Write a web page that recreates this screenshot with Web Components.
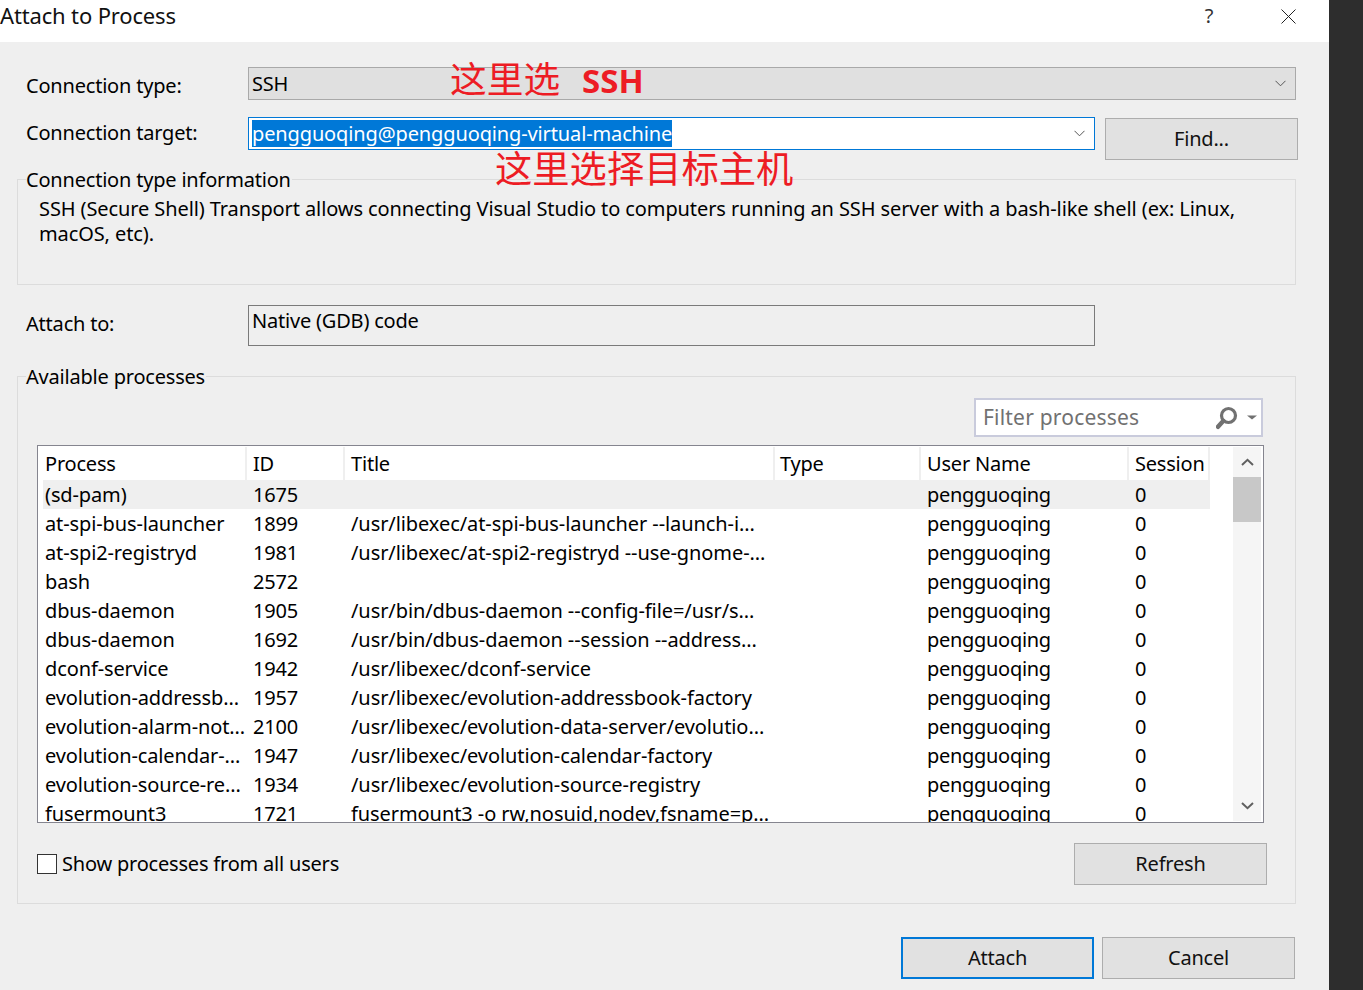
<!DOCTYPE html>
<html>
<head>
<meta charset="utf-8">
<title>Attach to Process</title>
<style>
  html, body{
    margin: 0;
    height: 990px;
    overflow: hidden;
    background: #2d2d2d;
    font-family: "Noto Sans", "Noto Sans CJK SC", sans-serif;
    font-size: 20px;
    color: #000;
  }
</style>
</head>
<body>

<vs-dialog heading="Attach to Process">
  <vs-row label="Connection type:">
    <vs-select kind="flat" style="width:1048px">SSH</vs-select>
  </vs-row>
  <vs-row label="Connection target:" style="margin-top:13px;--label-height:32px">
    <vs-select kind="focus" style="width:847px"><span style="background:#0078d7;color:#fff">pengguoqing@pengguoqing-virtual-machine</span></vs-select>
    <vs-button style="margin-left:10px;margin-top:1px">Find...</vs-button>
  </vs-row>

  <vs-group label="Connection type information" style="margin-top:19px;height:106px">
    <div style="padding:3px 40px 0 21px;line-height:25px;letter-spacing:-.1px">SSH (Secure Shell) Transport allows connecting Visual Studio to computers running an SSH server with a bash-like shell (ex: Linux,<br>macOS, etc).</div>
  </vs-group>

  <vs-row label="Attach to:" style="margin-top:20px">
    <vs-readonly style="width:847px">Native (GDB) code</vs-readonly>
  </vs-row>

  <vs-group label="Available processes" style="margin-top:30px;height:528px">
    <div style="display:flex;justify-content:flex-end;margin:8px 32px 0 0"><vs-filter></vs-filter></div>
    <vs-process-list style="margin:8px 31px 0 19px"></vs-process-list>
    <div style="display:flex;align-items:flex-start;justify-content:space-between;margin:20px 28px 0 19px">
      <vs-check style="margin-top:11px">Show processes from all users</vs-check>
      <vs-button>Refresh</vs-button>
    </div>
  </vs-group>

  <div style="display:flex;justify-content:flex-end;gap:8px;margin:33px 1px 0 0">
    <vs-button primary>Attach</vs-button>
    <vs-button>Cancel</vs-button>
  </div>

  <vs-note slot="notes" style="left:450px;top:52px">这里选<b>SSH</b></vs-note>
  <vs-note slot="notes" style="left:495px;top:142px;font-size:37.3px">这里选择目标主机</vs-note>
</vs-dialog>

<script>
class VsDialog extends HTMLElement{
  constructor(){
    super();
    this.attachShadow({ mode: 'open' });
    this.shadowRoot.innerHTML = `
      <style>
        :host{
          display: block;
          position: relative;
          width: 1329px;
          height: 990px;
          background: #efefef;
          letter-spacing: -.2px;
        }
        header{
          display: flex;
          align-items: center;
          height: 42px;
          background: #fff;
          color: #111;
        }
        h1{
          flex: 1;
          margin: -12px 0 0;
          font-size: 22px;
          line-height: 30px;
          font-weight: 400;
          letter-spacing: -.15px;
        }
        .help{
          width: 20px;
          margin: -11px 62px 0 0;
          text-align: center;
          font-size: 20px;
          color: #333;
        }
        svg{
          display: block;
          margin: -9px 33px 0 0;
        }
        main{
          padding: 25px 33px 0 17px;
        }
      </style>
      <header>
        <h1></h1>
        <span class="help">?</span>
        <svg width="15" height="15" viewBox="0 0 15 15"><path d="M.5 .5 14.5 14.5M14.5 .5 .5 14.5" stroke="#222" fill="none"/></svg>
      </header>
      <main><slot></slot></main>
      <slot name="notes"></slot>
    `;
    this.shadowRoot.querySelector('h1').textContent = this.getAttribute('heading');
  }
}
customElements.define('vs-dialog', VsDialog);

class VsRow extends HTMLElement{
  constructor(){
    super();
    this.attachShadow({ mode: 'open' });
    this.shadowRoot.innerHTML = `
      <style>
        :host{
          display: flex;
          align-items: flex-start;
        }
        label{
          flex: none;
          width: 222px;
          padding-left: 9px;
          line-height: var(--label-height, 37px);
        }
      </style>
      <label></label><slot></slot>
    `;
    this.shadowRoot.querySelector('label').textContent = this.getAttribute('label');
  }
}
customElements.define('vs-row', VsRow);

class VsSelect extends HTMLElement{
  constructor(){
    super();
    this.attachShadow({ mode: 'open' });
    this.shadowRoot.innerHTML = `
      <style>
        :host{
          display: flex;
          align-items: center;
          flex: none;
          box-sizing: border-box;
          height: 33px;
          padding: 0 9px 0 3px;
          border: 1px solid #a9a9a9;
          background: #e0e0e0;
          line-height: 25px;
          white-space: nowrap;
        }
        :host([kind='focus']){
          border-color: #0078d7;
          background: #fff;
          letter-spacing: -.13px;
        }
        .text{ flex: 1; }
        svg{ display: block; }
      </style>
      <div class="text"><slot></slot></div>
      <svg width="11" height="7" viewBox="0 0 11 7"><path d="M.5 .8 5.5 5.8 10.5 .8" fill="none" stroke="#555"/></svg>
    `;
  }
}
customElements.define('vs-select', VsSelect);

class VsButton extends HTMLElement{
  constructor(){
    super();
    this.attachShadow({ mode: 'open' });
    this.shadowRoot.innerHTML = `
      <style>
        :host{
          display: flex;
          align-items: center;
          justify-content: center;
          flex: none;
          box-sizing: border-box;
          width: 193px;
          height: 42px;
          border: 1px solid #adadad;
          background: #e1e1e1;
          color: #111;
          padding-bottom: 2px;
        }
        :host([primary]){
          border: 2px solid #0078d7;
        }
      </style>
      <slot></slot>
    `;
  }
}
customElements.define('vs-button', VsButton);

class VsGroup extends HTMLElement{
  constructor(){
    super();
    this.attachShadow({ mode: 'open' });
    this.shadowRoot.innerHTML = `
      <style>
        :host{
          display: block;
          box-sizing: border-box;
          border: 1px solid #dcdcdc;
        }
        .legend{
          display: table;
          margin: -14px 0 0 8px;
          padding-right: 1px;
          line-height: 27px;
          background: #efefef;
        }
      </style>
      <div class="legend"></div>
      <slot></slot>
    `;
    this.shadowRoot.querySelector('.legend').textContent = this.getAttribute('label');
  }
}
customElements.define('vs-group', VsGroup);

class VsReadonly extends HTMLElement{
  constructor(){
    super();
    this.attachShadow({ mode: 'open' });
    this.shadowRoot.innerHTML = `
      <style>
        :host{
          display: block;
          flex: none;
          box-sizing: border-box;
          height: 41px;
          padding: 2px 3px;
          border: 1px solid #7a7a7a;
          line-height: 26px;
        }
      </style>
      <slot></slot>
    `;
  }
}
customElements.define('vs-readonly', VsReadonly);

class VsFilter extends HTMLElement{
  constructor(){
    super();
    this.attachShadow({ mode: 'open' });
    this.shadowRoot.innerHTML = `
      <style>
        :host{
          display: flex;
          align-items: center;
          box-sizing: border-box;
          width: 289px;
          height: 39px;
          padding-left: 7px;
          border: 2px solid #c9cbdc;
          background: #fff;
          color: #717171;
        }
        span{ flex: 1; font-size: 21px; letter-spacing: .2px; margin-top: -2px; }
        svg{ display: block; margin-right: 4px; }
      </style>
      <span>Filter processes</span>
      <svg width="41" height="24" viewBox="0 0 41 24">
        <circle cx="12.5" cy="9.5" r="7" fill="none" stroke="#717171" stroke-width="3.2"/>
        <path d="M7.2 15 2 20.8" stroke="#717171" stroke-width="4.4" stroke-linecap="round"/>
        <path d="M31 9.5H41L36 13.5Z" fill="#717171"/>
      </svg>
    `;
  }
}
customElements.define('vs-filter', VsFilter);

const PROCESSES = [
  ['(sd-pam)', '1675', ''],
  ['at-spi-bus-launcher', '1899', '/usr/libexec/at-spi-bus-launcher --launch-i...'],
  ['at-spi2-registryd', '1981', '/usr/libexec/at-spi2-registryd --use-gnome-...'],
  ['bash', '2572', ''],
  ['dbus-daemon', '1905', '/usr/bin/dbus-daemon --config-file=/usr/s...'],
  ['dbus-daemon', '1692', '/usr/bin/dbus-daemon --session --address...'],
  ['dconf-service', '1942', '/usr/libexec/dconf-service'],
  ['evolution-addressb...', '1957', '/usr/libexec/evolution-addressbook-factory'],
  ['evolution-alarm-not...', '2100', '/usr/libexec/evolution-data-server/evolutio...'],
  ['evolution-calendar-...', '1947', '/usr/libexec/evolution-calendar-factory'],
  ['evolution-source-re...', '1934', '/usr/libexec/evolution-source-registry'],
  ['fusermount3', '1721', 'fusermount3 -o rw,nosuid,nodev,fsname=p...']
];

class VsProcessList extends HTMLElement{
  constructor(){
    super();
    this.attachShadow({ mode: 'open' });
    const head = ['Process', 'ID', 'Title', 'Type', 'User Name', 'Session']
      .map(t => `<div class="cell head">${t}</div>`).join('');
    const rows = PROCESSES.map((p, i) => `
      <div class="row${i == 0 ? ' current' : ''}">
        <div class="cell name">${p[0]}</div>
        <div class="cell">${p[1]}</div>
        <div class="cell title">${p[2]}</div>
        <div class="cell"></div>
        <div class="cell user">pengguoqing</div>
        <div class="cell">0</div>
      </div>`).join('');
    this.shadowRoot.innerHTML = `
      <style>
        :host{
          display: flex;
          box-sizing: border-box;
          height: 378px;
          padding-left: 5px;
          border: 1px solid #85858f;
          background: #fff;
          overflow: hidden;
        }
        .table{
          flex: none;
          width: 1167px;
          height: 376px;
          overflow: hidden;
        }
        .header, .row{
          display: grid;
          grid-template-columns: 204px 98px 430px 146px 208px 81px;
        }
        .header{ height: 34px; }
        .row{ height: 29px; line-height: 29px; }
        .current{ background: #efefef; }
        .cell{
          box-sizing: border-box;
          padding-left: 6px;
          white-space: nowrap;
          overflow: hidden;
        }
        .cell:first-child{ padding-left: 2px; }
        .cell:nth-child(4){ padding-left: 5px; }
        .name{ letter-spacing: -.12px; }
        .title{ letter-spacing: -.08px; }
        .user{ letter-spacing: -.3px; }
        .head{
          margin-top: 1px;
          line-height: 33px;
          border-right: 2px solid #efefef;
        }
        vs-scrollbar{ margin: 1px 0 1px 23px; }
      </style>
      <div class="table">
        <div class="header">${head}</div>
        ${rows}
      </div>
      <vs-scrollbar></vs-scrollbar>
    `;
  }
}
customElements.define('vs-process-list', VsProcessList);

class VsScrollbar extends HTMLElement{
  constructor(){
    super();
    this.attachShadow({ mode: 'open' });
    this.shadowRoot.innerHTML = `
      <style>
        :host{
          display: flex;
          flex-direction: column;
          flex: none;
          width: 28px;
          height: 374px;
          background: #f5f5f5;
        }
        .arrow{
          display: flex;
          align-items: center;
          justify-content: center;
          height: 30px;
        }
        .thumb{
          height: 45px;
          background: #c8c8c8;
        }
        .rest{ flex: 1; }
        svg{ display: block; }
      </style>
      <div class="arrow"><svg width="13" height="8" viewBox="0 0 13 8"><path d="M1 7 6.5 1.8 12 7" fill="none" stroke="#606060" stroke-width="2"/></svg></div>
      <div class="thumb"></div>
      <div class="rest"></div>
      <div class="arrow"><svg width="13" height="8" viewBox="0 0 13 8"><path d="M1 1 6.5 6.2 12 1" fill="none" stroke="#606060" stroke-width="2"/></svg></div>
    `;
  }
}
customElements.define('vs-scrollbar', VsScrollbar);

class VsCheck extends HTMLElement{
  constructor(){
    super();
    this.attachShadow({ mode: 'open' });
    this.shadowRoot.innerHTML = `
      <style>
        :host{
          display: flex;
          align-items: center;
          gap: 5px;
          line-height: 20px;
        }
        i{
          box-sizing: border-box;
          width: 20px;
          height: 20px;
          border: 1px solid #333;
          background: #fff;
        }
      </style>
      <i></i><slot></slot>
    `;
  }
}
customElements.define('vs-check', VsCheck);

class VsNote extends HTMLElement{
  constructor(){
    super();
    this.attachShadow({ mode: 'open' });
    this.shadowRoot.innerHTML = `
      <style>
        :host{
          position: absolute;
          font-family: "Noto Sans CJK SC", sans-serif;
          font-size: 36.7px;
          line-height: 50px;
          color: #ed1c24;
          letter-spacing: 0;
          white-space: nowrap;
        }
        ::slotted(b){
          margin-left: 22px;
          font-family: "Noto Sans", sans-serif;
          font-size: 33px;
          font-weight: 700;
        }
      </style>
      <slot></slot>
    `;
  }
}
customElements.define('vs-note', VsNote);
</script>
</body>
</html>
